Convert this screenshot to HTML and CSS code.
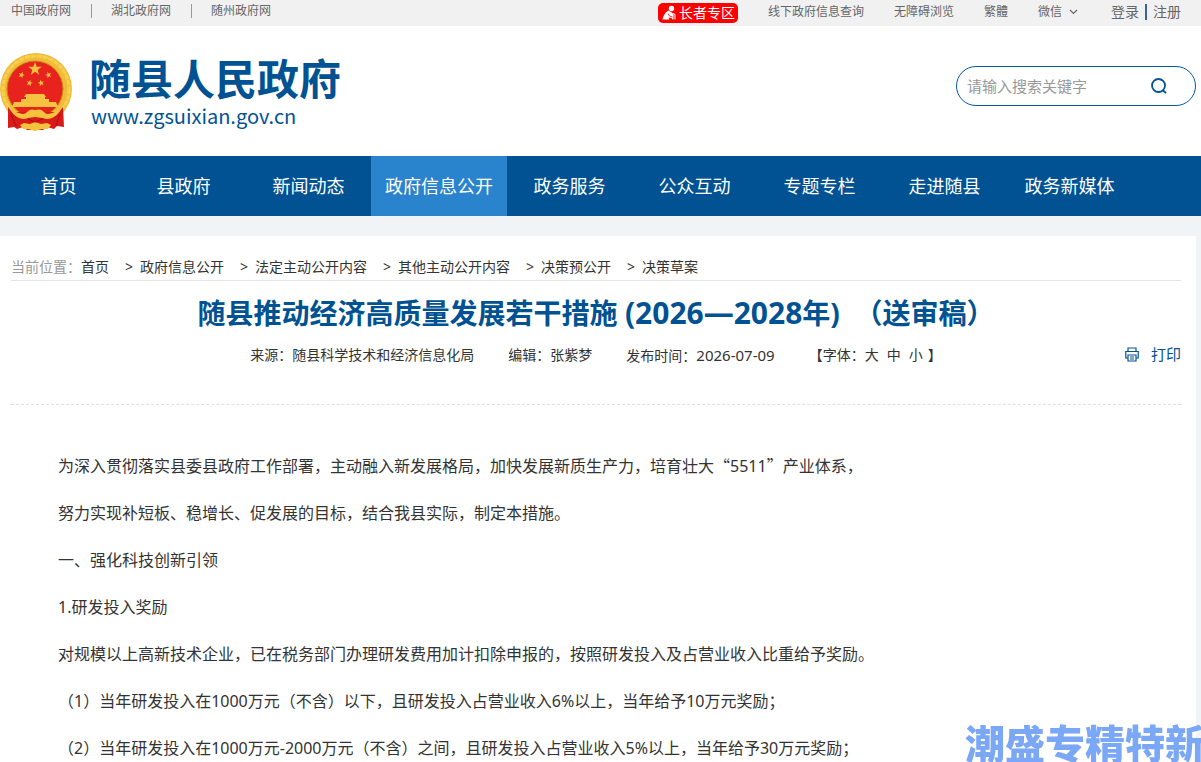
FILE: index.html
```html
<!DOCTYPE html>
<html lang="zh-CN">
<head>
  <meta charset="UTF-8">
  <meta name="viewport" content="width=device-width, initial-scale=1.0">
  <title>随县推动经济高质量发展若干措施</title>
  <link rel="stylesheet" href="styles.css">
</head>
<body>
<!-- top bar -->
<div class="topbar">
  <div class="wrap topbar-inner">
    <div class="gov-links">
      <a href="#">中国政府网</a>
      <a href="#">湖北政府网</a>
      <a href="#">随州政府网</a>
    </div>
    <div class="tools">
      <a href="#" class="elder">
        <svg width="14" height="16" viewBox="0 0 14 16" fill="#fff">
          <circle cx="9.500" cy="3.500" r="2.700"/>
          <path d="M6.500 5.500C4 6.500 1.500 10 .5 14.500h7l-1-2 3 .5 1 1.500h1V9L9 7z"/>
          <path d="M11 8.500l2 1v5" fill="none" stroke="#fff"/>
          <path d="M6 8.500l1.500 2.500 3 1" fill="none" stroke="#f00" stroke-width=".8"/>
        </svg>
        <span>长者专区</span>
      </a>
      <a href="#">线下政府信息查询</a>
      <a href="#">无障碍浏览</a>
      <a href="#">繁體</a>
      <a href="#" class="wechat">微信
        <svg width="9" height="6" viewBox="0 0 9 6"><path d="M1 1l3.500 3.500L8 1" fill="none" stroke="#666" stroke-width="1.200"/></svg>
      </a>
      <div class="user">
        <a href="#">登录</a>
        <a href="#">注册</a>
      </div>
    </div>
  </div>
</div>

<!-- logo + search -->
<header class="header">
  <div class="wrap header-inner">
    <a href="#" class="logo">
      <svg class="emblem" width="76" height="78" viewBox="-4 0 76 78">
        <defs>
          <path id="star" d="M0-7L1.700-2.200 6.700-2.200 2.700.9 4.100 5.700 0 2.800-4.100 5.700-2.700.9-6.700-2.200-1.700-2.200z"/>
        </defs>
        <circle cx="36" cy="36" r="36" fill="#f0bb38"/>
        <circle cx="36" cy="36" r="33" fill="none" stroke="#f8d050" stroke-width="3" stroke-dasharray="5 1"/>
        <circle cx="35" cy="36" r="28" fill="#e8231d" stroke="#c98a17"/>
        <g fill="#f5c242">
          <use href="#star" x="35" y="16"/>
          <use href="#star" transform="translate(21.500 22) scale(.48) rotate(20)"/>
          <use href="#star" transform="translate(48.500 22) scale(.48) rotate(-20)"/>
          <use href="#star" transform="translate(29.500 30) scale(.48) rotate(15)"/>
          <use href="#star" transform="translate(41 30) scale(.48) rotate(-15)"/>
          <path d="M26 41h18l2 3h-1v2h4v3H21v-3h5v-2h-2z"/>
          <path d="M14 49h42l2 5H12z"/>
        </g>
        <path d="M8 54l4 5 12 0 11-1 12 1 12 0 4-5 1 20-7-1-3 3-7-2-4 3H27l-4-3-6 2-3-2-6 1z" fill="#d91a18"/>
        <path d="M10 56c8 4 14 7 17 3 3-3 5-3 8-2 4-1 6-1 9 2 3 4 9 1 17-3-4 8-12 12-18 9l-8-1-7 1c-6 3-14-1-18-9z" fill="#f5c23c"/>
        <path d="M20 72l4-2 6 1 5-2 6 2 6-1 4 2-3 4-6 0-7 2-7-2-5 0z" fill="#f5c23c"/>
        <path d="M11 61l5 12M60 61l-4 12M28 66l7 3 8-3" fill="none" stroke="#a80f12"/>
      </svg>
      <span class="logo-text">
        <strong>随县人民政府</strong>
        <small>www.zgsuixian.gov.cn</small>
      </span>
    </a>
    <form class="search">
      <input type="text" placeholder="请输入搜索关键字" aria-label="搜索">
      <button type="button" aria-label="搜索">
        <svg width="18" height="18" viewBox="0 0 18 18" fill="none" stroke="#005293" stroke-width="1.800"><circle cx="8.500" cy="8.500" r="6.500"/><path d="M12.500 13l3.500 3"/></svg>
      </button>
    </form>
  </div>
</header>

<nav class="nav">
  <div class="wrap nav-inner">
    <a href="#">首页</a>
    <a href="#">县政府</a>
    <a href="#">新闻动态</a>
    <a href="#" class="active">政府信息公开</a>
    <a href="#">政务服务</a>
    <a href="#">公众互动</a>
    <a href="#">专题专栏</a>
    <a href="#">走进随县</a>
    <a href="#">政务新媒体</a>
  </div>
</nav>

<main class="wrap content">
  <div class="crumbs">
    <span class="label">当前位置：</span>
    <a href="#">首页</a>
    <a href="#">政府信息公开</a>
    <a href="#">法定主动公开内容</a>
    <a href="#">其他主动公开内容</a>
    <a href="#">决策预公开</a>
    <a href="#">决策草案</a>
  </div>

  <h1>随县推动经济高质量发展若干措施 <span class="years">(2026—2028</span>年)&nbsp; （送审稿）</h1>

  <div class="meta">
    <span>来源：随县科学技术和经济信息化局</span>
    <span>编辑：张紫梦</span>
    <span>发布时间：<time>2026-07-09</time></span>
    <span class="font-size">【字体：<button type="button">大</button><button type="button">中</button><button type="button">小</button>】</span>
    <a href="#" class="print">
      <svg width="14" height="15" viewBox="0 0 14 15" fill="none" stroke="#005293" stroke-width="1.200"><path d="M3 4V1h8v3M3 11H.8V4.500h12.400V11H11M3 8h8v6H3zM5 10h4M5 12h4"/></svg>
      打印
    </a>
  </div>

  <article class="article">
    <p>为深入贯彻落实县委县政府工作部署，主动融入新发展格局，加快发展新质生产力，培育壮大<span class="quote">“</span>5511<span class="quote">”</span>产业体系，</p>
    <p>努力实现补短板、稳增长、促发展的目标，结合我县实际，制定本措施。</p>
    <p>一、强化科技创新引领</p>
    <p>1.研发投入奖励</p>
    <p>对规模以上高新技术企业，已在税务部门办理研发费用加计扣除申报的，按照研发投入及占营业收入比重给予奖励。</p>
    <p>（1）当年研发投入在1000万元（不含）以下，且研发投入占营业收入6%以上，当年给予10万元奖励；</p>
    <p>（2）当年研发投入在1000万元-2000万元（不含）之间，且研发投入占营业收入5%以上，当年给予30万元奖励；</p>
  </article>
</main>

<div class="watermark">潮盛专精特新</div>
</body>
</html>
```
FILE: styles.css
```css
* { margin: 0; padding: 0; box-sizing: border-box; }
body {
  background: #f0f4f7;
  color: #333;
  font: 14px/20px "Noto Sans", "Noto Sans CJK SC", sans-serif;
  overflow-x: hidden;
}
a { color: inherit; text-decoration: none; }
button, input { font: inherit; color: inherit; border: none; background: none; outline: none; }
button { cursor: pointer; }
svg { display: block; flex-shrink: 0; }

.wrap { margin: 0 5px 0 -4px; }

/* top bar */
.topbar { background: #f1f1f1; color: #666; font-size: 12px; }
.topbar-inner {
  display: flex;
  justify-content: space-between;
  padding: 0 15px;
  height: 26px;
}
.gov-links { display: flex; align-items: center; padding-bottom: 4px; }
.gov-links a { line-height: 14px; }
.gov-links a + a { margin-left: 20px; padding-left: 19px; border-left: 1px solid #999; }
.tools { display: flex; align-items: center; gap: 30px; padding-bottom: 2px; }
.elder {
  display: flex;
  align-items: center;
  gap: 3px;
  height: 20px;
  padding: 0 3px 0 4px;
  margin-top: 2px;
  border-radius: 5px;
  background: #f00;
  color: #fff;
  font-size: 14px;
}
.wechat { display: flex; align-items: center; gap: 7px; }
.user { display: flex; align-items: center; margin-left: 3px; font-size: 14px; }
.user a { line-height: 16px; }
.user a + a { margin-left: 6px; padding-left: 6px; border-left: 2px solid #3a62a0; }

/* header */
.header { background: #fff; }
.header-inner {
  display: flex;
  justify-content: space-between;
  align-items: flex-start;
  padding: 27px 0 25px;
}
.logo { display: flex; gap: 17px; color: #005293; }
.logo-text { display: flex; flex-direction: column; }
.logo-text strong { font-size: 42px; line-height: 52px; }
.logo-text small {
  padding-left: 2px;
  font: 400 20px/22px "Noto Sans CJK SC", sans-serif;
}
.search {
  display: flex;
  align-items: center;
  width: 240px;
  height: 40px;
  margin-top: 13px;
  padding: 0 27px 0 10px;
  border: 1px solid #005aa7;
  border-radius: 20px;
}
.search input { flex: 1; min-width: 0; font-size: 15px; }
.search input::placeholder { color: #999; }

/* nav */
.nav { background: #005293; color: #fff; }
.nav-inner { display: flex; }
.nav a {
  min-width: 125px;
  padding: 0 14px;
  font-size: 18px;
  line-height: 60px;
  text-align: center;
}
.nav a.active { background: #2a83cd; }

/* content */
.content { margin-top: 20px; padding: 20px 15px; background: #fff; }
.crumbs {
  display: flex;
  padding-bottom: 3px;
  border-bottom: 1px solid #e5e5e5;
  line-height: 21px;
}
.crumbs .label { color: #999; }
.crumbs a + a::before { content: ">"; margin: 0 7px 0 16px; }
h1 {
  margin-top: 12px;
  color: #005293;
  font-size: 28px;
  line-height: 40px;
  text-align: center;
}
.years { font-size: 30px; }
.meta {
  display: flex;
  justify-content: center;
  gap: 34px;
  position: relative;
  padding: 12px 0 38px;
  border-bottom: 1px dashed #e0e0e0;
}
.meta time { font-size: 15px; }
.font-size button { margin-right: 8px; }
.font-size button:last-child { margin-right: 5px; }
.print {
  position: absolute;
  right: 0;
  top: 11px;
  display: flex;
  align-items: center;
  gap: 12px;
  color: #005293;
  font-size: 15px;
}
.article { padding: 37px 15px 0; font-size: 16px; }
.article p { text-indent: 2em; line-height: 47px; }
.quote { font-family: "Noto Sans CJK SC", sans-serif; }

.watermark {
  position: fixed;
  right: -4px;
  bottom: 0;
  color: #7ba7f7;
  font: 900 40px/40px "Noto Sans CJK SC", sans-serif;
  white-space: nowrap;
  pointer-events: none;
}
```
